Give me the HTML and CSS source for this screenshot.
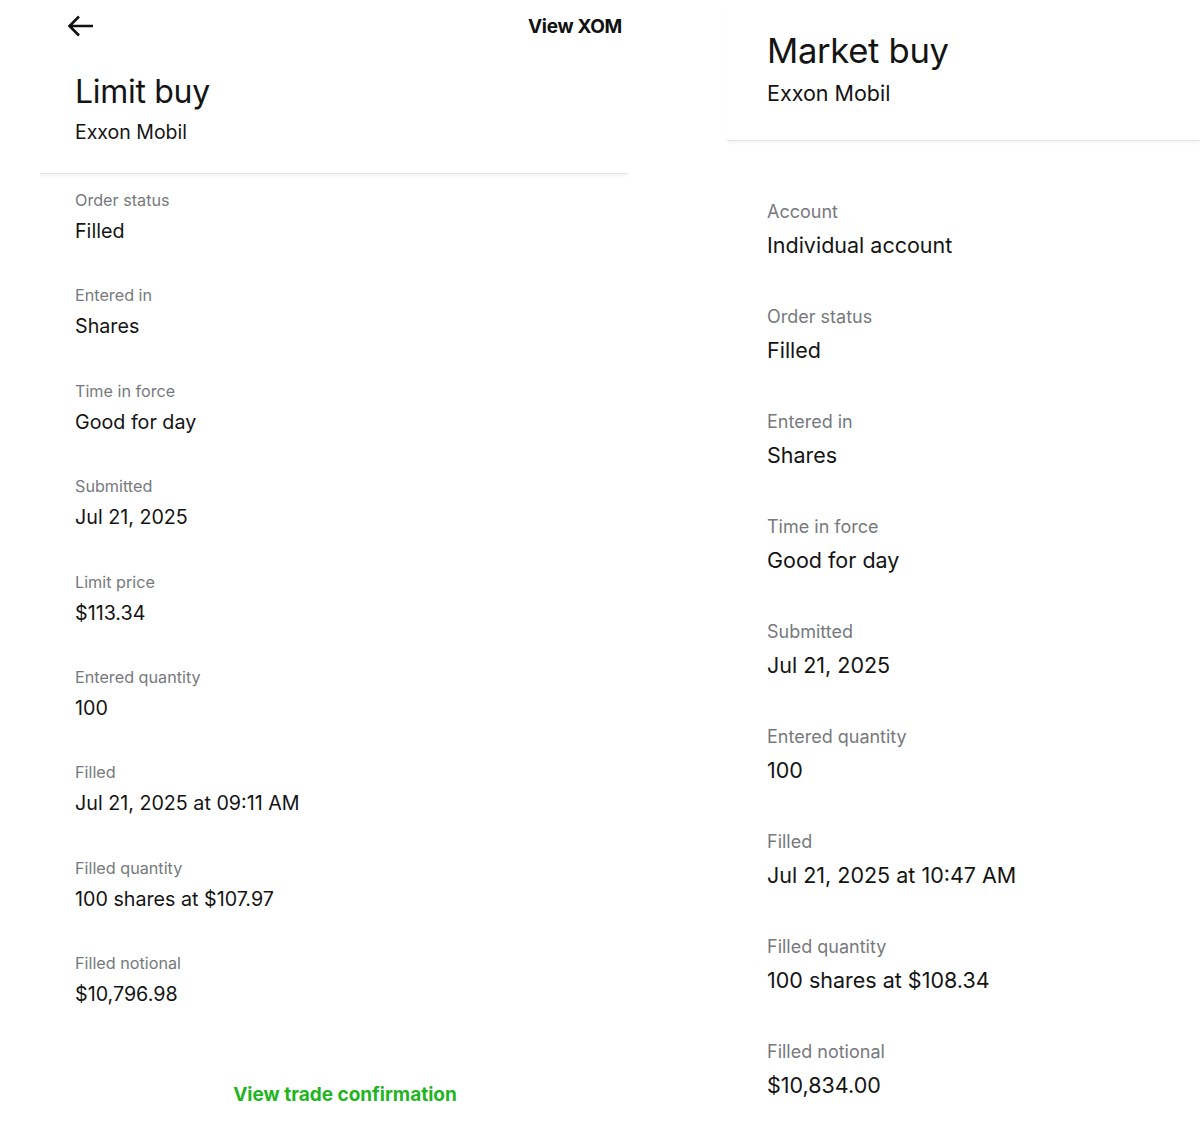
FILE: index.html
```html
<!DOCTYPE html>
<html lang="en">
<head>
<meta charset="utf-8">
<title>Order details</title>
<link rel="stylesheet" href="styles.css">
</head>
<body>
<div class="page">
  <section class="panel panel-left">
    <div class="head">
      <div class="topbar">
        <svg class="back" width="28" height="24" viewBox="0 0 28 24" aria-hidden="true">
          <path d="M26 12H3M12 2.5L2.5 12L12 21.5" fill="none" stroke="#111" stroke-width="2.6" stroke-linecap="butt" stroke-linejoin="miter"/>
        </svg>
        <span class="view">View XOM</span>
      </div>
      <h1 class="title">Limit buy</h1>
      <div class="sub">Exxon Mobil</div>
    </div>
    <div class="rows">
      <div class="row"><div class="label">Order status</div><div class="value">Filled</div></div>
      <div class="row"><div class="label">Entered in</div><div class="value">Shares</div></div>
      <div class="row"><div class="label">Time in force</div><div class="value">Good for day</div></div>
      <div class="row"><div class="label">Submitted</div><div class="value">Jul 21, 2025</div></div>
      <div class="row"><div class="label">Limit price</div><div class="value">$113.34</div></div>
      <div class="row"><div class="label">Entered quantity</div><div class="value">100</div></div>
      <div class="row"><div class="label">Filled</div><div class="value">Jul 21, 2025 at 09:11 AM</div></div>
      <div class="row"><div class="label">Filled quantity</div><div class="value">100 shares at $107.97</div></div>
      <div class="row"><div class="label">Filled notional</div><div class="value">$10,796.98</div></div>
    </div>
    <div class="confirm">View trade confirmation</div>
  </section>

  <section class="panel panel-right">
    <div class="head">
      <h1 class="title">Market buy</h1>
      <div class="sub">Exxon Mobil</div>
    </div>
    <div class="rows">
      <div class="row"><div class="label">Account</div><div class="value">Individual account</div></div>
      <div class="row"><div class="label">Order status</div><div class="value">Filled</div></div>
      <div class="row"><div class="label">Entered in</div><div class="value">Shares</div></div>
      <div class="row"><div class="label">Time in force</div><div class="value">Good for day</div></div>
      <div class="row"><div class="label">Submitted</div><div class="value">Jul 21, 2025</div></div>
      <div class="row"><div class="label">Entered quantity</div><div class="value">100</div></div>
      <div class="row"><div class="label">Filled</div><div class="value">Jul 21, 2025 at 10:47 AM</div></div>
      <div class="row"><div class="label">Filled quantity</div><div class="value">100 shares at $108.34</div></div>
      <div class="row"><div class="label">Filled notional</div><div class="value">$10,834.00</div></div>
    </div>
  </section>
</div>
</body>
</html>
```

FILE: styles.css
```css
* { box-sizing: border-box; }

html, body {
  margin: 0;
  padding: 0;
  background: #ffffff;
}

body {
  font-family: Inter, "Liberation Sans", Arial, sans-serif;
  color: #141414;
}

.page {
  display: flex;
  align-items: flex-start;
  width: 1200px;
  height: 1140px;
  overflow: hidden;
}

.panel {
  display: flex;
  flex-direction: column;
}

/* ---------- left panel ---------- */
.panel-left {
  margin-left: 40px;
  width: 588px;
  height: 1104px;
  overflow: hidden;
}

.panel-left .head {
  padding: 0 6px 28px 35px;
  border-bottom: 1px solid #e4e4e4;
  box-shadow: 0 3px 3px -1px rgba(0, 0, 0, 0.05);
}

.topbar {
  display: flex;
  align-items: center;
  justify-content: space-between;
  height: 52px;
  margin-left: -8px;
}

.back { display: block; }

.view {
  font-weight: 700;
  font-size: 19px;
  letter-spacing: -0.3px;
  color: #111;
}

.title {
  margin: 0;
  font-weight: 400;
}

.panel-left .title {
  margin-top: 20px;
  font-size: 32px;
  line-height: 40px;
  letter-spacing: -0.3px;
}

.panel-left .sub {
  margin-top: 7px;
  font-size: 19.5px;
  line-height: 26px;
}

.rows {
  display: flex;
  flex-direction: column;
}

.panel-left .rows {
  padding: 16px 0 0 35px;
  gap: 41.4px;
}

.row {
  display: flex;
  flex-direction: column;
}

.label {
  color: #77797d;
}

.value {
  color: #141414;
}

.panel-left .label {
  font-size: 16.2px;
  line-height: 20px;
}

.panel-left .value {
  margin-top: 8px;
  font-size: 19.7px;
  line-height: 26px;
}

.confirm {
  margin-top: 75px;
  margin-left: 22px;
  text-align: center;
  color: #1fb51f;
  font-weight: 700;
  font-size: 19px;
  line-height: 26px;
}

/* ---------- right panel ---------- */
.panel-right {
  margin-left: 99px;
  flex: 1;
}

.panel-right .head {
  padding: 28px 0 33px 40px;
  border-bottom: 1px solid #e4e4e4;
  box-shadow: 0 3px 3px -1px rgba(0, 0, 0, 0.05);
}

.panel-right .title {
  font-size: 34.6px;
  line-height: 44px;
  letter-spacing: -0.3px;
}

.panel-right .sub {
  margin-top: 7px;
  font-size: 21.5px;
  line-height: 28px;
}

.panel-right .rows {
  padding: 60px 0 0 40px;
  gap: 47px;
}

.panel-right .label {
  font-size: 18px;
  line-height: 22px;
}

.panel-right .value {
  margin-top: 8px;
  font-size: 21.5px;
  line-height: 28px;
}
```
